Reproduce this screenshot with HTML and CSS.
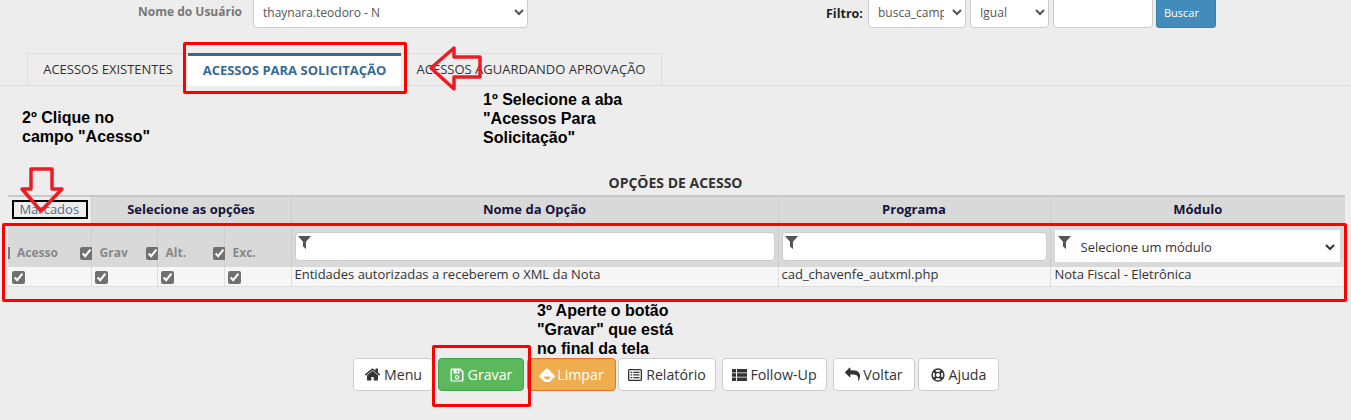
FILE: index.html
```html
<!DOCTYPE html>
<html lang="pt-BR">
<head>
    <meta charset="UTF-8">
    <title>Opções de Acesso</title>
    <link rel="stylesheet" href="styles.css">
</head>
<body>
    <!-- Top filters -->
    <div class="top-bar">
        <label class="user-label">Nome do Usuário</label>
        <select class="field user-select"><option>thaynara.teodoro - N</option></select>
        <div class="filter-group">
            <label class="filter-label">Filtro:</label>
            <select class="field filter-field"><option>busca_campo</option></select>
            <select class="field filter-op"><option>Igual</option></select>
            <input class="field filter-text" type="text">
            <button class="search-btn">Buscar</button>
        </div>
    </div>

    <!-- Tabs -->
    <div class="tabs">
        <a class="tab tab-first">ACESSOS EXISTENTES</a>
        <a class="tab tab-active">ACESSOS PARA SOLICITAÇÃO</a>
        <a class="tab tab-last">ACESSOS AGUARDANDO APROVAÇÃO</a>
    </div>

    <h4 class="table-title">OPÇÕES DE ACESSO</h4>

    <table class="access-table">
        <colgroup>
            <col class="col-a"><col class="col-b"><col class="col-c"><col class="col-c">
            <col class="col-name"><col class="col-prog"><col class="col-mod">
        </colgroup>
        <thead>
            <tr class="head-row">
                <th class="marked">Marcados</th>
                <th colspan="3">Selecione as opções</th>
                <th>Nome da Opção</th>
                <th>Programa</th>
                <th>Módulo</th>
            </tr>
            <tr class="filter-row">
                <th class="check-head first"><i class="stub"></i><span>Acesso</span><input type="checkbox" checked></th>
                <th class="check-head"><span>Grav</span><input type="checkbox" checked></th>
                <th class="check-head"><span>Alt.</span><input type="checkbox" checked></th>
                <th class="check-head"><span>Exc.</span></th>
                <th class="filter-cell">
                    <div class="filter-box">
                        <svg class="funnel" viewBox="0 0 14 14"><path d="M0 0h14L8.600 6.200V14L5.400 11.400V6.200z"/></svg>
                    </div>
                </th>
                <th class="filter-cell">
                    <div class="filter-box">
                        <svg class="funnel" viewBox="0 0 14 14"><path d="M0 0h14L8.600 6.200V14L5.400 11.400V6.200z"/></svg>
                    </div>
                </th>
                <th class="filter-cell mod-cell">
                    <div class="mod-box">
                        <svg class="funnel" viewBox="0 0 14 14"><path d="M0 0h14L8.600 6.200V14L5.400 11.400V6.200z"/></svg>
                        <select class="mod-select"><option>Selecione um módulo</option></select>
                    </div>
                </th>
            </tr>
        </thead>
        <tbody>
            <tr class="data-row">
                <td class="check-cell"><input type="checkbox" checked></td>
                <td class="check-cell"><input type="checkbox" checked></td>
                <td class="check-cell"><input type="checkbox" checked></td>
                <td class="check-cell"><input type="checkbox" checked></td>
                <td>Entidades autorizadas a receberem o XML da Nota</td>
                <td>cad_chavenfe_autxml.php</td>
                <td>Nota Fiscal - Eletrônica</td>
            </tr>
        </tbody>
    </table>

    <!-- Bottom buttons -->
    <div class="actions">
        <button class="btn btn-menu">
            <svg class="icon" viewBox="0 0 1792 1792"><path d="M1472 992v480q0 26-19 45t-45 19h-384v-384h-256v384h-384q-26 0-45-19t-19-45v-480q0-1 .5-3t.5-3l575-474 575 474q1 2 1 6zm223-69l-62 74q-8 9-21 11h-3q-13 0-21-7l-692-577-692 577q-12 8-24 7-13-2-21-11l-62-74q-8-10-7-23.500t11-21.500l719-599q32-26 76-26t76 26l244 204v-195q0-14 9-23t23-9h192q14 0 23 9t9 23v408l219 182q10 8 11 21.500t-7 23.500z"/></svg>Menu
        </button>
        <button class="btn btn-save">
            <svg class="icon icon-save" viewBox="0 0 14 14"><path fill-rule="evenodd" d="M1.500 0.500h9l3 3v9a1 1 0 0 1-1 1h-11a1 1 0 0 1-1-1v-11a1 1 0 0 1 1-1zM2 2v10.500h10V4.200L10 2H9.500v3.500h-6V2zM6.500 2.200v2.300h1.500V2.200zM7 7a2.300 2.300 0 1 0 0 4.600A2.300 2.300 0 0 0 7 7zM7 8.200a1.100 1.100 0 1 1 0 2.200a1.100 1.100 0 1 1 0-2.200z"/></svg>Gravar
        </button>
        <button class="btn btn-clear">
            <svg class="icon icon-wide" viewBox="0 0 15 13"><path fill-rule="evenodd" d="M0.400 7L6.800 0.500a1 1 0 0 1 1.400 0L14.600 7a1 1 0 0 1 0 1.400L10 13H5.500L0.400 8.400a1 1 0 0 1 0-1.400zM4 8H11.200L8.900 10.800H6.600z"/></svg>Limpar
        </button>
        <button class="btn btn-report">
            <svg class="icon icon-report" viewBox="0 0 14 14"><path fill-rule="evenodd" d="M1.500 1h11A1.500 1.500 0 0 1 14 2.500v9a1.500 1.500 0 0 1-1.500 1.500h-11A1.500 1.500 0 0 1 0 11.500v-9A1.500 1.500 0 0 1 1.500 1zM1.300 2.300v9.400h11.400V2.300zM2.500 3.700h1.700v1.300H2.500zM5.300 3.700h6.200v1.300H5.300zM2.500 6.300h1.700v1.300H2.500zM5.300 6.300h6.200v1.300H5.300zM2.500 9h1.700v1.300H2.500zM5.300 9h6.200v1.300H5.300z"/></svg>Relatório
        </button>
        <button class="btn btn-follow">
            <svg class="icon icon-list" viewBox="0 0 15 14"><path d="M0 1h4v3.400H0zM5 1h10v3.400H5zM0 5.300h4v3.400H0zM5 5.300h10v3.400H5zM0 9.600h4V13H0zM5 9.600h10V13H5z"/></svg>Follow-Up
        </button>
        <button class="btn btn-back">
            <svg class="icon icon-reply" viewBox="0 0 1792 1792"><path d="M1792 1120q0 166-127 451-3 7-10.500 24t-13.500 30-13 22q-12 17-28 17-15 0-23.500-10t-8.500-25q0-9 2.500-26.500t2.500-23.500q5-68 5-123 0-101-17.500-181t-48.500-138.500-80-101-105.500-69.500-133-42.500-154-21.500-175.500-6h-224v256q0 26-19 45t-45 19-45-19l-512-512q-19-19-19-45t19-45l512-512q19-19 45-19t45 19 19 45v256h224q713 0 875 403 53 134 53 333z"/></svg>Voltar
        </button>
        <button class="btn btn-help">
            <svg class="icon icon-help" viewBox="0 0 14 14"><circle cx="7" cy="7" r="5.900" fill="none" stroke="currentColor" stroke-width="1.500"/><circle cx="7" cy="7" r="2.700" fill="none" stroke="currentColor" stroke-width="1.300"/><path d="M2.800 2.800L5.200 5.200M11.200 2.800L8.800 5.200M2.800 11.200L5.200 8.800M11.200 11.200L8.800 8.800" stroke="currentColor" stroke-width="2.400"/></svg>Ajuda
        </button>
    </div>

    <!-- Annotations pasted over the screen -->
    <div class="mark red-box box-tab"></div>
    <div class="mark red-box box-row"></div>
    <div class="mark red-box box-save"></div>
    <div class="mark black-box"></div>

    <svg class="mark arrow-left" viewBox="0 0 60 50"><path d="M6 24L29 4V13H55V33H29V45z" fill="none" stroke="#ed1c24" stroke-width="3.500" stroke-linejoin="round"/></svg>
    <svg class="mark arrow-down" viewBox="0 0 55 52"><path d="M16 4H37V24H47L26 46L7 24H16z" fill="none" stroke="#ed1c24" stroke-width="3.500" stroke-linejoin="round"/></svg>

    <p class="mark note note-one">1º Selecione a aba<br>"Acessos Para<br>Solicitação"</p>
    <p class="mark note note-two">2º Clique no<br>campo "Acesso"</p>
    <p class="mark note note-three">3º Aperte o botão<br>"Gravar" que está<br>no final da tela</p>
</body>
</html>
```

FILE: styles.css
```css
/* General styles */
body {
    margin: 0;
    height: 420px;
    overflow: hidden;
    position: relative;
    background-color: #ededed;
    font-family: "Open Sans", sans-serif;
    font-size: 13px;
    color: #333;
}

/* Top filters */
.top-bar {
    display: flex;
    align-items: flex-start;
    height: 53px;
    box-sizing: border-box;
    padding-left: 138px;
}

.user-label {
    width: 115px;
    padding-top: 3px;
    font-size: 12px;
    font-weight: bold;
    color: #777;
}

.field {
    box-sizing: border-box;
    height: 31px;
    margin-top: -3px;
    background-color: #fff;
    border: 1px solid #ccc;
    border-radius: 4px;
    font-family: "Open Sans", sans-serif;
    font-size: 12px;
    color: #555;
    padding: 0 5px;
}

.user-select {
    width: 275px;
}

.filter-group {
    display: flex;
    align-items: flex-start;
    margin-left: 298px;
}

.filter-label {
    width: 42px;
    padding-top: 5px;
    font-size: 12.500px;
    font-weight: bold;
    color: #222;
    white-space: nowrap;
}

.filter-field {
    width: 98px;
    margin-right: 4px;
}

.filter-op {
    width: 79px;
    margin-right: 4px;
}

.filter-text {
    width: 100px;
    margin-right: 3px;
}

.search-btn {
    width: 60px;
    height: 31px;
    margin-top: -3px;
    padding: 0 0 0 7px;
    text-align: left;
    background-color: #428bba;
    border: 1px solid #3a80ad;
    border-radius: 3px;
    color: #fff;
    font-family: "Open Sans", sans-serif;
    font-size: 11px;
}

/* Tabs */
.tabs {
    display: flex;
    height: 33px;
    box-sizing: border-box;
    padding-left: 27px;
    border-bottom: 1px solid #ddd;
}

.tab {
    box-sizing: border-box;
    height: 32px;
    line-height: 31px;
    text-align: center;
    color: #333;
    border: 1px solid #ddd;
    border-bottom: none;
}

.tab-first {
    width: 161px;
    border-right: none;
}

.tab-active {
    width: 213px;
    background-color: #fff;
    font-weight: bold;
    color: #336b94;
    border: none;
    border-top: 3px solid #336b94;
    height: 33px;
    line-height: 29px;
}

.tab-last {
    width: 261px;
    border-left: none;
}

/* Table */
.table-title {
    margin: 0;
    padding-top: 87px;
    height: 22px;
    line-height: 20px;
    text-align: center;
    font-size: 14px;
    font-weight: bold;
    color: #333;
}

.access-table {
    box-sizing: border-box;
    width: 1337px;
    margin: 0 0 0 8px;
    table-layout: fixed;
    border-collapse: collapse;
    border-top: 2px solid #c8c8c8;
}

.col-a { width: 83px; }
.col-b { width: 66px; }
.col-c { width: 67px; }
.col-name { width: 487px; }
.col-prog { width: 272px; }
.col-mod { width: 295px; }

.head-row th {
    height: 24px;
    padding: 0 0 3px;
    background-color: #d9d9d9;
    border-right: 1px solid #ccc;
    color: #14143c;
    font-size: 13px;
    font-weight: bold;
}

.head-row th:last-child {
    border-right: none;
}

.head-row .marked {
    font-weight: normal;
    color: #4a6d8c;
    background-color: #ededed;
}

.filter-row th {
    height: 41px;
    padding: 0;
    background-color: #d9d9d9;
    border-right: 1px solid #ccc;
    border-top: 1px solid #ccc;
}

.filter-row th:last-child {
    border-right: none;
}

.check-head {
    position: relative;
    text-align: left;
    font-size: 12px;
    color: #888;
    vertical-align: bottom;
}

.check-head span {
    display: inline-block;
    padding: 0 0 4px 8px;
    line-height: 20px;
}

.check-head.first span {
    padding-left: 9px;
}

.check-head .stub {
    position: absolute;
    left: 0;
    bottom: 8px;
    width: 2px;
    height: 12px;
    background-color: #777;
}

.check-head input {
    position: absolute;
    right: -2px;
    bottom: 7px;
}

input[type="checkbox"] {
    display: block;
    width: 13px;
    height: 13px;
    margin: 0;
    accent-color: #717171;
}

.filter-cell {
    vertical-align: middle;
    padding: 1px 3px 0 3px !important;
}

.mod-cell {
    padding: 0 5px 0 4px !important;
}

.filter-box {
    box-sizing: border-box;
    height: 29px;
    background-color: #fff;
    border: 1px solid #ccc;
    border-radius: 4px;
    padding: 3px 2px;
    text-align: left;
}

.mod-box {
    display: flex;
    align-items: flex-start;
    box-sizing: border-box;
    height: 32px;
    background-color: #fff;
    padding: 6px 2px 0 3px;
}

.funnel {
    display: block;
    width: 13px;
    height: 13px;
    fill: #555;
}

.mod-select {
    flex: 1;
    margin: 0 0 0 6px;
    height: 22px;
    border: none;
    background-color: #fff;
    font-family: "Open Sans", sans-serif;
    font-size: 13px;
    color: #333;
}

.data-row td {
    height: 19px;
    padding: 0 3px;
    background-color: #f6f6f6;
    border-right: 1px solid #ddd;
    border-bottom: 1px solid #ddd;
    font-size: 13px;
    line-height: 14px;
    color: #333;
    vertical-align: top;
    white-space: nowrap;
}

.data-row td:last-child {
    border-right: none;
    padding-left: 4px;
}

.data-row .check-cell {
    height: 15px;
    padding: 4px 0 0 3px;
}

.data-row .check-cell:first-child {
    padding-left: 4px;
}

/* Bottom buttons */
.actions {
    display: flex;
    margin: 71px 0 0 353px;
}

.btn {
    box-sizing: border-box;
    display: flex;
    align-items: center;
    justify-content: center;
    height: 33px;
    padding: 0;
    background-color: #fff;
    border: 1px solid #ccc;
    border-radius: 4px;
    font-family: "Open Sans", sans-serif;
    font-size: 14.200px;
    color: #333;
}

.icon {
    width: 17px;
    height: 17px;
    margin-right: 3px;
    fill: currentColor;
}

.icon-save,
.icon-report,
.icon-help {
    width: 14px;
    height: 14px;
    margin-right: 4px;
}

.icon-list {
    width: 15px;
    height: 14px;
    margin-right: 3px;
}

.icon-wide {
    width: 16px;
    height: 14px;
    margin-right: 2px;
}

.icon-reply {
    width: 15px;
    height: 15px;
}

.btn-menu { width: 80px; margin-right: 5px; }
.btn-save { width: 86px; margin-right: 3px; background-color: #5cb85c; border-color: #3ea34a; color: #fff; }
.btn-clear { width: 89px; margin-right: 2px; background-color: #f0ad4e; border-color: #f0702a; color: #fff; }
.btn-report { width: 98px; margin-right: 6px; }
.btn-follow { width: 105px; margin-right: 6px; }
.btn-back { width: 82px; margin-right: 3px; }
.btn-help { width: 81px; }

/* Annotations */
.mark {
    position: absolute;
}

.red-box {
    box-sizing: border-box;
    border: 3px solid #f00;
    border-radius: 2px;
}

.box-tab { left: 183px; top: 42px; width: 224px; height: 52px; }
.box-row { left: 2px; top: 223px; width: 1345px; height: 79px; }
.box-save { left: 432px; top: 345px; width: 99px; height: 62px; }

.black-box {
    left: 12px;
    top: 200px;
    width: 76px;
    height: 19px;
    box-sizing: border-box;
    border: 2px solid #000;
}

.arrow-left { left: 425px; top: 44px; width: 60px; height: 50px; }
.arrow-down { left: 15px; top: 165px; width: 55px; height: 52px; }

.note {
    margin: 0;
    font-family: "Liberation Sans", sans-serif;
    font-size: 16px;
    font-weight: bold;
    line-height: 19px;
    color: #000;
    white-space: nowrap;
}

.note-one { left: 483px; top: 90px; }
.note-two { left: 22px; top: 108px; }
.note-three { left: 537px; top: 301px; }
```
